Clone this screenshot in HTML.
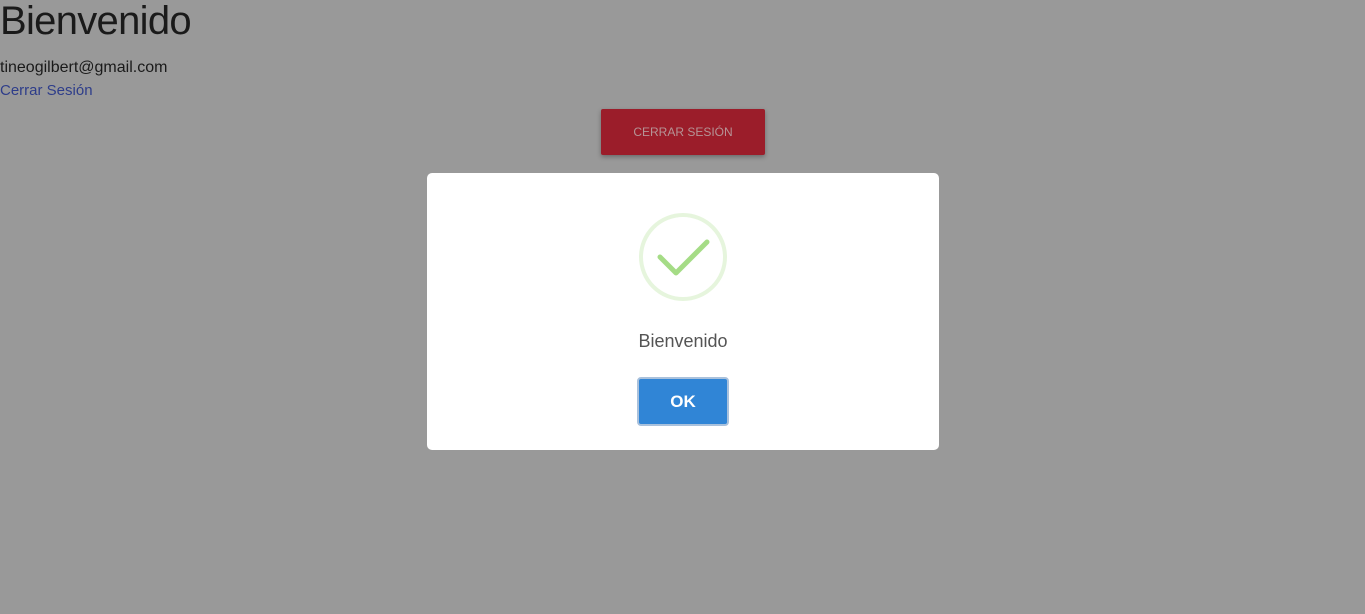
<!DOCTYPE html>
<html><head><style>
body{margin:0;width:1365px;height:614px;background:#999999;font-family:"Liberation Sans",sans-serif;position:relative;overflow:hidden}
h1{position:absolute;left:0;top:-1px;margin:0;font-weight:300;font-size:40px;color:#1a1a1a;letter-spacing:-0.7px}
.em{position:absolute;left:0;top:59px;font-size:16px;color:#1a1a1a}
.lk{position:absolute;left:0;top:82px;font-size:15px;color:#2e3d8a}
.btn{position:absolute;left:601px;top:109px;width:164px;height:46px;background:#9b1d2a;color:#b69496;font-size:12px;text-align:center;line-height:46px;border-radius:2px;box-shadow:0 2px 5px rgba(0,0,0,.3)}
.modal{position:absolute;left:427px;top:173px;width:512px;height:277px;background:#fff;border-radius:5px}
.t{position:absolute;width:512px;top:331px;text-align:center;font-size:18px;color:#545454}
.ok{position:absolute;left:637px;top:377px;width:88px;height:45px;background:#3085d6;border:2px solid #a9c1dc;border-radius:4px;color:#fff;font-weight:bold;font-size:17px;text-align:center;line-height:45px}
</style></head><body>
<h1>Bienvenido</h1>
<div class="em">tineogilbert@gmail.com</div>
<div class="lk">Cerrar Sesión</div>
<div class="btn">CERRAR SESIÓN</div>
<div class="modal"></div>
<svg style="position:absolute;left:0;top:0" width="1365" height="614">
<circle cx="683" cy="257" r="42" fill="none" stroke="#e6f5dd" stroke-width="4"/>
<polyline points="660,257 676,273 707,242" fill="none" stroke="#a5dc86" stroke-width="5" stroke-linecap="round" stroke-linejoin="round"/>
</svg>
<div class="t" style="left:427px">Bienvenido</div>
<div class="ok">OK</div>
</body></html>
